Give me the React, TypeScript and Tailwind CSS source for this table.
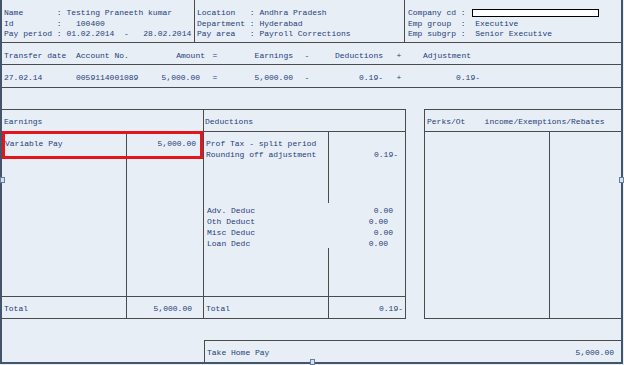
import React from 'react';

const line = 'border-[#4b4b4b]';

type Cell = { text: string; cls: string };

const transferHead: Cell[] = [
  { text: 'Transfer date', cls: 'w-[74px] pl-[2px]' },
  { text: 'Account No.', cls: 'w-[64px]' },
  { text: 'Amount', cls: 'w-[65px] text-right' },
  { text: '=', cls: 'w-[20px] text-center' },
  { text: 'Earnings', cls: 'w-[68px] text-right' },
  { text: '-', cls: 'w-[28px] text-center' },
  { text: 'Deductions', cls: 'w-[62px] text-right' },
  { text: '+', cls: 'w-[32px] text-center' },
  { text: 'Adjustment', cls: 'w-[65px] pl-[8px]' },
];

const transferRow: Cell[] = [
  { text: '27.02.14', cls: 'w-[74px] pl-[2px]' },
  { text: '0059114001089', cls: 'w-[64px]' },
  { text: '5,000.00', cls: 'w-[65px] text-right pr-[5px]' },
  { text: '=', cls: 'w-[20px] text-center' },
  { text: '5,000.00', cls: 'w-[68px] text-right' },
  { text: '-', cls: 'w-[28px] text-center' },
  { text: '0.19-', cls: 'w-[62px] text-right' },
  { text: '+', cls: 'w-[32px] text-center' },
  { text: '0.19-', cls: 'w-[65px] text-right' },
];

const otherDeductions = [
  { label: 'Adv. Deduc', value: '0.00', pr: 'pr-[12px]' },
  { label: 'Oth Deduct', value: '0.00', pr: 'pr-[17px]' },
  { label: 'Misc Deduc', value: '0.00', pr: 'pr-[12px]' },
  { label: 'Loan Dedc', value: '0.00', pr: 'pr-[17px]' },
];

function Handle({ className }: { className: string }) {
  return (
    <span
      className={`absolute w-[5px] h-[6px] bg-[#cfe4f3] border border-[#6a7d94] ${className}`}
    />
  );
}

export default function App() {
  return (
    <div className="w-[624px] h-[365px] bg-[#e8eef5] overflow-hidden font-['Liberation_Mono',monospace] text-[8px] leading-[10.5px] text-[#1f3d7a]">
      <div className="relative w-[623px] h-[364px] flex flex-col border-l-2 border-r-2 border-b-2 border-[#44546a]">
        {/* Employee header */}
        <div className={`h-[43px] flex border-b ${line}`}>
          <div className={`w-[193px] pt-[8px] pl-[2px] whitespace-pre border-r ${line}`}>
            <div>{'Name       : Testing Praneeth kumar'}</div>
            <div>{'Id         :   100400'}</div>
            <div>{'Pay period : 01.02.2014  -   28.02.2014'}</div>
          </div>
          <div className={`w-[210px] pt-[8px] pl-[2px] whitespace-pre border-r ${line}`}>
            <div>{'Location   : Andhra Pradesh'}</div>
            <div>{'Department : Hyderabad'}</div>
            <div>{'Pay area   : Payroll Corrections'}</div>
          </div>
          <div className="flex-1 pt-[8px] pl-[3px] whitespace-pre">
            <div className="flex items-center">
              <span>{'Company cd : '}</span>
              <span className="ml-[2px] w-[127px] h-[8px] bg-white border border-black" />
            </div>
            <div>{'Emp group  :  Executive'}</div>
            <div>{'Emp subgrp :  Senior Executive'}</div>
          </div>
        </div>

        {/* Transfer table */}
        <div className={`h-[22px] flex pt-[8px] leading-[10px] whitespace-pre border-b ${line}`}>
          {transferHead.map((c, i) => (
            <span key={i} className={c.cls}>
              {c.text}
            </span>
          ))}
        </div>
        <div className={`h-[23px] flex pt-[8px] leading-[10px] whitespace-pre border-b ${line}`}>
          {transferRow.map((c, i) => (
            <span key={i} className={c.cls}>
              {c.text}
            </span>
          ))}
        </div>

        {/* Earnings / Deductions / Perks */}
        <div className="mt-[21px] h-[210px] flex">
          <div className={`relative w-[202px] flex flex-col border-t border-b border-r ${line}`}>
            <div className={`h-[22px] pt-[7px] pl-[2px] leading-[10px] border-b ${line}`}>Earnings</div>
            <div className="flex-1 flex">
              <div className={`w-[125px] pt-[7px] pl-[3px] leading-[10px] border-r ${line}`}>Variable Pay</div>
              <div className="flex-1 pt-[7px] pr-[7px] leading-[10px] text-right">5,000.00</div>
            </div>
            <div className={`h-[22px] flex border-t ${line}`}>
              <div className={`w-[125px] pt-[7px] pl-[2px] leading-[10px] border-r ${line}`}>Total</div>
              <div className="flex-1 pt-[7px] pr-[11px] leading-[10px] text-right">5,000.00</div>
            </div>
            {/* selection highlight */}
            <div className="absolute left-0 top-[21px] w-[201px] h-[28px] border-[3px] border-[#e3161e]" />
          </div>

          <div className={`w-[202px] flex flex-col border-t border-b border-r ${line}`}>
            <div className={`h-[22px] pt-[7px] pl-[1px] leading-[10px] border-b ${line}`}>Deductions</div>
            <div className="flex-1 flex flex-col leading-[11px]">
              <div className="h-[71px] flex">
                <div className={`w-[125px] pt-[6px] pl-[2px] whitespace-pre border-r ${line}`}>
                  <div>Prof Tax - split period</div>
                  <div>Rounding off adjustment</div>
                </div>
                <div className="flex-1 pt-[17px] pr-[7px] text-right">0.19-</div>
              </div>
              <div className="h-[45px] pt-[2px]">
                {otherDeductions.map((d) => (
                  <div key={d.label} className="flex pl-[3px]">
                    <span className="flex-1">{d.label}</span>
                    <span className={d.pr}>{d.value}</span>
                  </div>
                ))}
              </div>
              <div className="flex-1 flex">
                <div className={`w-[125px] border-r ${line}`} />
                <div className="flex-1" />
              </div>
            </div>
            <div className={`h-[22px] flex border-t ${line}`}>
              <div className={`w-[125px] pt-[7px] pl-[2px] leading-[10px] border-r ${line}`}>Total</div>
              <div className="flex-1 pt-[7px] pr-[2px] leading-[10px] text-right">0.19-</div>
            </div>
          </div>

          <div className="w-[18px]" />

          <div className={`flex-1 flex flex-col border-t border-b border-l ${line}`}>
            <div className={`h-[22px] pt-[7px] pl-[2px] leading-[10px] whitespace-pre border-b ${line}`}>
              {'Perks/Ot    income/Exemptions/Rebates'}
            </div>
            <div className="flex-1 flex">
              <div className={`w-[125px] border-r ${line}`} />
              <div className="flex-1" />
            </div>
          </div>
        </div>

        {/* Take home pay */}
        <div className="mt-[21px] flex-1 flex">
          <div className="w-[202px]" />
          <div className={`flex-1 flex justify-between pt-[7px] pl-[2px] pr-[7px] leading-[10px] border-t border-l ${line}`}>
            <span>Take Home Pay</span>
            <span>5,000.00</span>
          </div>
        </div>

        <Handle className="-left-[2px] top-[177px]" />
        <Handle className="-right-[3px] top-[177px]" />
        <Handle className="left-[308px] top-[359px]" />
      </div>
    </div>
  );
}
